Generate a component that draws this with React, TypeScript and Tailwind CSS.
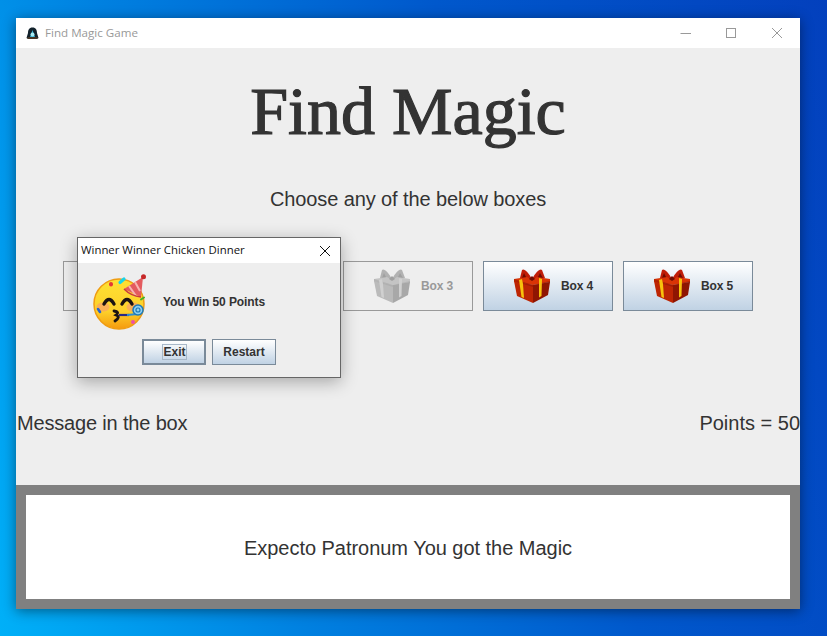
function Gift({ gray = false }: { gray?: boolean }) {
  const c = gray
    ? { dark: "#a8a8a8", mid: "#bababa", light: "#c4c4c4", rib: "#d0d0d0", bow: "#b2b2b2", bowD: "#a0a0a0" }
    : { dark: "#8f1602", mid: "#bd2503", light: "#d93406", rib: "#f7c20c", bow: "#c01d08", bowD: "#6e0c02" };
  return (
    <svg width="36" height="34" viewBox="0 0 36 34" className="shrink-0">
      <path d="M18 10 C14 3 10 -1 8 1 L6 9 L12 11 Z" fill={c.bow} />
      <path d="M18 10 C22 3 26 -1 28 1 L31 9 L24 11 Z" fill={c.bow} />
      <path d="M10 4 L13 10 L8 9 Z M26 4 L23 10 L29 9 Z" fill={c.bowD} />
      <path d="M0 10 L13 8 L18 11 L23 8 L36 10 L36 13 L19 16 L0 13 Z" fill={c.light} />
      <path d="M0 12 L19 16 L19 34 L3 27 Z" fill={c.mid} />
      <path d="M19 16 L36 13 L34 26 L19 34 Z" fill={c.dark} />
      <path d="M0 12 L19 18 L36 14 L36 12 L19 16 L0 10 Z" fill={c.dark} opacity="0.55" />
      <path d="M5 11 L8 10 L9 15 L10 29 L7.500 28 Z" fill={c.rib} />
      <path d="M25 9 L28 10 L27.500 27 L25 28.500 L25 15 Z" fill={c.rib} />
      <path d="M15 10 L18 7 L21 10 L18 12 Z" fill={c.bowD} />
    </svg>
  );
}

function PartyFace() {
  return (
    <svg width="56" height="56" viewBox="0 0 56 56" className="shrink-0">
      <defs>
        <linearGradient id="faceFill" x1="0" y1="0" x2="0" y2="1">
          <stop offset="0" stopColor="#fee133" />
          <stop offset="0.65" stopColor="#fdd02a" />
          <stop offset="1" stopColor="#f59a0e" />
        </linearGradient>
      </defs>
      <circle cx="28" cy="30" r="25" fill="url(#faceFill)" stroke="#ef9c12" strokeWidth="1.500" />
      <ellipse cx="12" cy="33" rx="6.500" ry="4.500" fill="#f6a06a" opacity="0.7" />
      <ellipse cx="42" cy="33" rx="6.500" ry="4.500" fill="#f6a06a" opacity="0.7" />
      <path d="M13 30 Q18 21 23 30" fill="none" stroke="#1c1412" strokeWidth="3.400" strokeLinecap="round" />
      <path d="M31 30 Q36 21 41 30" fill="none" stroke="#1c1412" strokeWidth="3.400" strokeLinecap="round" />
      <path d="M23 37 Q29 38 25 41 Q30 43 24 47" fill="none" stroke="#1c1412" strokeWidth="2.800" strokeLinecap="round" />
      <path d="M28 41 L38 41" stroke="#2a2a86" strokeWidth="2.200" />
      <path d="M36 41 L47 40" stroke="#2f8fd0" strokeWidth="1.800" />
      <circle cx="47" cy="36" r="5" fill="#8fd0ee" stroke="#1e79b8" strokeWidth="1.500" />
      <circle cx="47" cy="36" r="2" fill="none" stroke="#1e79b8" strokeWidth="1.200" />
      <path d="M33 15 L52 3 L50 23 Z" fill="#e45b5f" />
      <path d="M38 12 L45 22 M44 8 L49 17" stroke="#f7b4b0" strokeWidth="2" />
      <path d="M33 15 Q40 22 50 23" fill="none" stroke="#c73a40" strokeWidth="1.500" />
      <circle cx="52.500" cy="2.800" r="2.500" fill="#c62828" />
      <rect x="18" y="8" width="4" height="4.500" rx="2" fill="#e53935" />
      <path d="M29 8.500 L33 5" stroke="#19d3e8" strokeWidth="3.200" strokeLinecap="round" />
      <path d="M50 25.500 L53 23.500" stroke="#43b02a" strokeWidth="2" strokeLinecap="round" />
      <path d="M7 35 L9 38" stroke="#2962d0" strokeWidth="2.600" strokeLinecap="round" />
      <circle cx="42" cy="48" r="2" fill="#ec4fa8" />
    </svg>
  );
}

function BellIcon() {
  return (
    <svg width="13" height="13" viewBox="0 0 13 13" className="shrink-0">
      <path d="M6.500 0.500 C3 0.500 2 3 2 6 L0.500 11 L2 12 L11 12 L12.500 11 L11 6 C11 3 10 0.500 6.500 0.500 Z" fill="#12222c" />
      <path d="M6.500 3 L9 10 L4 10 Z" fill="#35b4d6" />
      <circle cx="6.500" cy="7.500" r="2" fill="#a6ecf5" />
      <path d="M1.500 11 L11.500 11" stroke="#7a4a20" strokeWidth="1" />
    </svg>
  );
}

function Box({ label, enabled }: { label: string; enabled: boolean }) {
  return enabled ? (
    <div className="flex h-[50px] w-[130px] items-center gap-[11px] border border-[#7a8a99] bg-[linear-gradient(#ffffff_0%,#e6edf4_40%,#c0d2e4_100%)] pl-[30px]">
      <Gift />
      <span className="text-[12px] font-bold tracking-[-0.1px] text-[#333333]">{label}</span>
    </div>
  ) : (
    <div className="flex h-[50px] w-[130px] items-center gap-[11px] border border-[#999999] pl-[30px]">
      <Gift gray />
      <span className="text-[12px] font-bold tracking-[-0.1px] text-[#999999]">{label}</span>
    </div>
  );
}

export default function App() {
  return (
    <div className="h-[636px] w-[827px] overflow-hidden bg-[linear-gradient(72deg,#00b0f8_0%,#0080e0_30%,#0058cc_62%,#0340bd_100%)] pl-4 pt-[18px] font-['Liberation_Sans',sans-serif] text-[#333333]">
      <div className="relative flex h-[591px] w-[784px] flex-col shadow-[0_2px_12px_rgba(0,0,0,0.45)]">
        <div className="flex h-[30px] shrink-0 items-center bg-white pl-[10px] font-['Open_Sans',sans-serif] text-[11.600px] text-[#999999]">
          <BellIcon />
          <span className="ml-[6px]">Find Magic Game</span>
          <div className="ml-auto flex items-center">
            <svg width="12" height="12" viewBox="0 0 12 12" className="mr-[33px]">
              <path d="M0.500 6.500 H11" stroke="#999999" fill="none" />
            </svg>
            <svg width="12" height="12" viewBox="0 0 12 12" className="mr-[34px]">
              <rect x="1.500" y="1.500" width="9" height="9" stroke="#999999" fill="none" />
            </svg>
            <svg width="12" height="12" viewBox="0 0 12 12" className="mr-[17px]">
              <path d="M1 1 L11 11 M11 1 L1 11" stroke="#999999" fill="none" />
            </svg>
          </div>
        </div>

        <div className="flex flex-1 flex-col bg-[#eeeeee]">
          <h1 className="mt-[18px] text-center font-['Liberation_Serif',serif] text-[68px] leading-[90px] font-normal text-[#333333] [-webkit-text-stroke:1.200px_#333333]">
            Find Magic
          </h1>
          <p className="mt-[31px] text-center text-[20px] leading-[24px] tracking-[-0.1px]">Choose any of the below boxes</p>
          <div className="mt-[50px] flex justify-center gap-[10px]">
            <Box label="Box 1" enabled={false} />
            <Box label="Box 2" enabled={false} />
            <Box label="Box 3" enabled={false} />
            <Box label="Box 4" enabled />
            <Box label="Box 5" enabled />
          </div>
          <div className="mt-[100px] flex justify-between pl-px text-[20px] leading-[24px]">
            <span className="tracking-[-0.17px]">Message in the box</span>
            <span>Points = 50</span>
          </div>
        </div>

        <div className="h-[124px] shrink-0 bg-[#808080] p-[10px]">
          <div className="flex h-full items-center justify-center bg-white pt-px text-[20px] tracking-[-0.03px]">
            Expecto Patronum You got the Magic
          </div>
        </div>

        <div className="absolute left-[61px] top-[219px] flex h-[141px] w-[264px] flex-col border border-[#666666] bg-[#eeeeee] shadow-[0_4px_16px_rgba(0,0,0,0.3)]">
          <div className="flex h-[25px] shrink-0 items-center justify-between bg-white pb-[2px] pl-[3px] pr-[9px] font-['Open_Sans',sans-serif] text-[11.400px] text-[#111111]">
            <span>Winner Winner Chicken Dinner</span>
            <svg width="12" height="12" viewBox="0 0 12 12" className="mt-[2px]">
              <path d="M1 1 L11 11 M11 1 L1 11" stroke="#111111" fill="none" />
            </svg>
          </div>
          <div className="flex items-center pl-[13px] pt-[11px]">
            <PartyFace />
            <span className="ml-[16px] text-[12px] font-bold tracking-[-0.1px] text-[#333333]">You Win 50 Points</span>
          </div>
          <div className="mt-[9px] flex justify-center gap-[6px] text-[12px] font-bold text-[#333333]">
            <div className="flex h-[26px] w-[64px] items-center justify-center border-2 border-[#7a8a99] bg-[linear-gradient(#ffffff_0%,#e6edf4_40%,#c0d2e4_100%)]">
              <span className="ml-px border border-[#a8b8c8] leading-[14px]">Exit</span>
            </div>
            <div className="flex h-[26px] w-[64px] items-center justify-center border border-[#7a8a99] bg-[linear-gradient(#ffffff_0%,#e6edf4_40%,#c0d2e4_100%)]">
              Restart
            </div>
          </div>
        </div>
      </div>
    </div>
  );
}
